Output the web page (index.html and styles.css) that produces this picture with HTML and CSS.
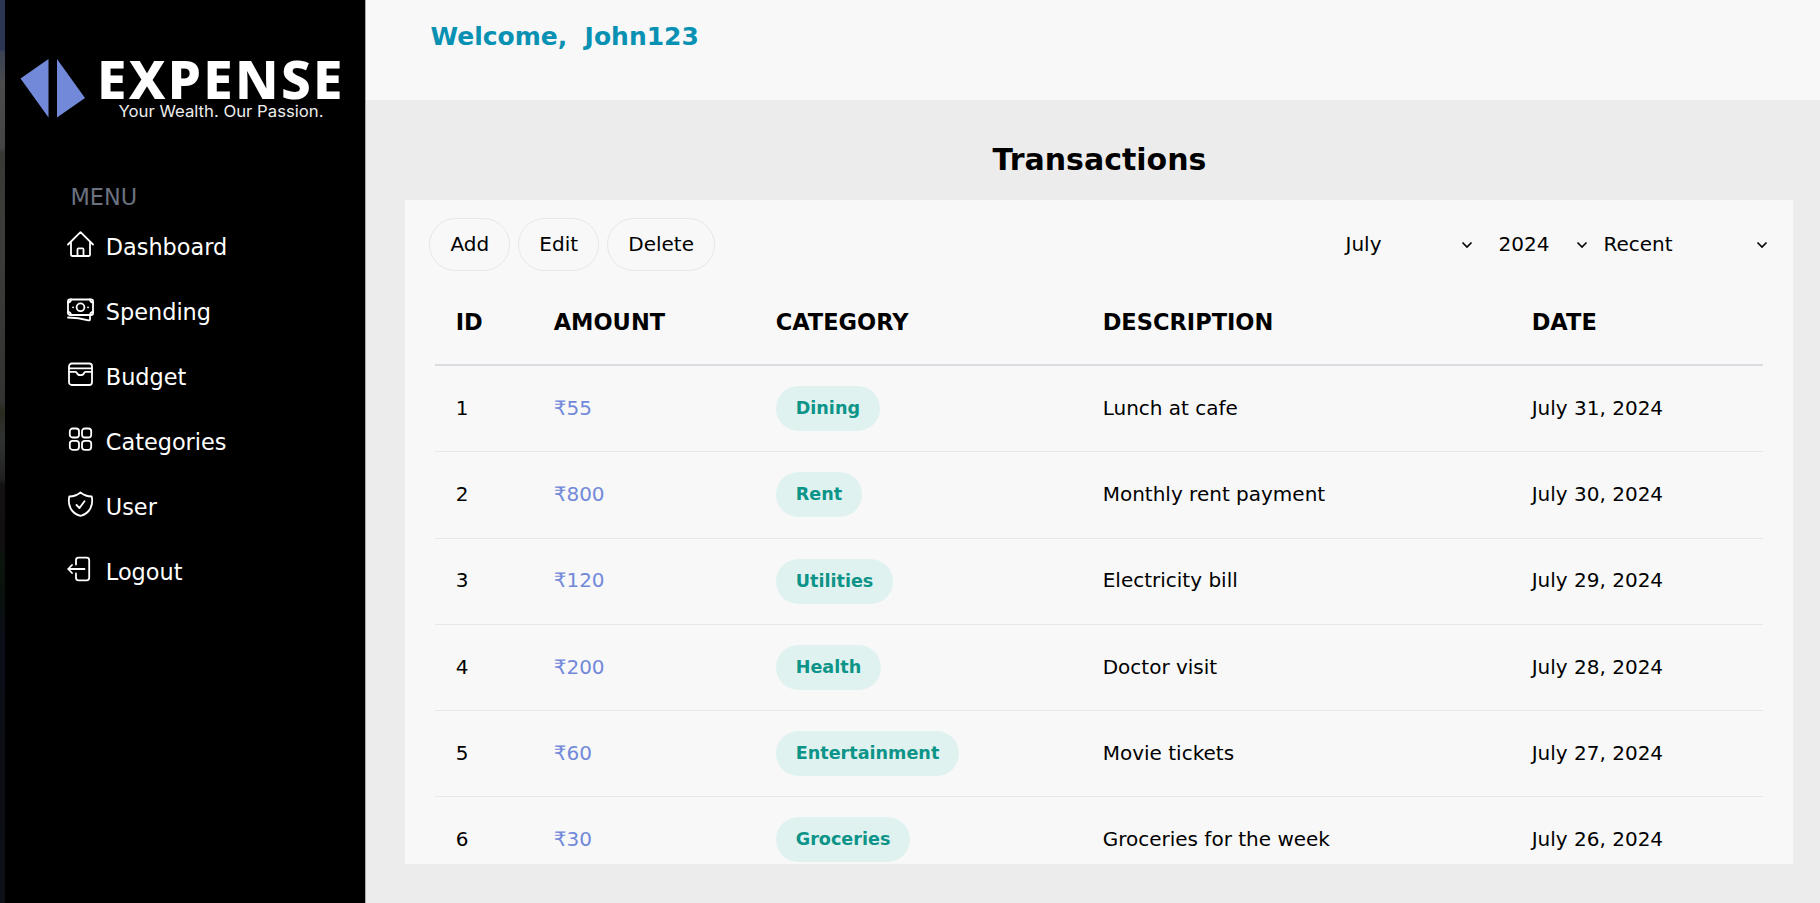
FILE: index.html
```html
<!DOCTYPE html>
<html lang="en">
<head>
<meta charset="utf-8">
<title>Expense - Transactions</title>
<link rel="stylesheet" href="styles.css">
</head>
<body>
<div class="app">
  <div class="backdrop"></div>
  <aside class="sidebar">
    <svg class="logo" width="360" height="70" viewBox="0 0 360 70">
      <path class="mark" d="M15.500 23.500 43.500 4V62.500zM52 4 80 43 52 62.500z"/>
      <text class="brand" x="92" y="43.500" textLength="245.500" lengthAdjust="spacing">EXPENSE</text>
      <text class="tagline" x="113.500" y="62" textLength="205" lengthAdjust="spacingAndGlyphs">Your Wealth. Our Passion.</text>
    </svg>
    <div class="menu-title">MENU</div>
    <nav class="menu">
      <a class="item"><svg class="icon" viewBox="0 0 27 27"><path d="M1 13.500 13.500 1.200 26 13.500M4 10.800V23.800Q4 25 5.200 25H21.800Q23 25 23 23.800V10.800M10.500 25V18.300Q10.500 17.300 11.500 17.300H15.500Q16.500 17.300 16.500 18.300V25"/></svg><span>Dashboard</span></a>
      <a class="item"><svg class="icon" viewBox="0 0 27 27"><rect x="1" y="3.500" width="25" height="15.500" rx="1.800"/><path d="M1 6.500Q3.500 6.500 4 3.500M26 6.500Q23.500 6.500 23 3.500M1 16Q3.500 16 4 19M26 16Q23.500 16 23 19M1 21.500C9 21.500 15 22.500 21.500 24.300Q23 24.500 23 23.500V20M6 11.300h.1M21 11.300h.1"/><circle cx="13.500" cy="11.300" r="3.900"/></svg><span>Spending</span></a>
      <a class="item"><svg class="icon" viewBox="0 0 27 27"><rect x="2" y="2.500" width="23" height="21.500" rx="2.800"/><path d="M2 7.300H25M2 10.800H8.500Q9.500 10.800 9.800 11.800C10.500 15 16.500 15 17.200 11.800Q17.500 10.800 18.500 10.800H25"/></svg><span>Budget</span></a>
      <a class="item"><svg class="icon" viewBox="0 0 27 27"><rect x="2.800" y="2.500" width="9.200" height="9" rx="2.800"/><rect x="15" y="2.500" width="9.200" height="9" rx="2.800"/><rect x="2.800" y="14.800" width="9.200" height="9" rx="2.800"/><rect x="15" y="14.800" width="9.200" height="9" rx="2.800"/></svg><span>Categories</span></a>
      <a class="item"><svg class="icon" viewBox="0 0 27 27"><path d="M13.500 1.500Q8.500 5.500 2.300 5.500C.5 14 4 22.500 13.500 24.800 23 22.500 26.500 14 24.700 5.500Q18.500 5.500 13.500 1.500ZM9.500 14 12.500 17 17.500 10.300"/></svg><span>User</span></a>
      <a class="item"><svg class="icon" viewBox="0 0 27 27"><path d="M9 8.500V4.200Q9 1.700 11.500 1.700H19.700Q22.200 1.700 22.200 4.200V21.800Q22.200 24.300 19.700 24.300H11.500Q9 24.300 9 21.800V17.500M17.500 13H1.200M5 9 1.200 13 5 17"/></svg><span>Logout</span></a>
    </nav>
  </aside>
  <main class="main">
    <header class="topbar">Welcome,&nbsp; John123</header>
    <h1 class="title">Transactions</h1>
    <section class="panel">
      <div class="toolbar">
        <button class="btn">Add</button><button class="btn">Edit</button><button class="btn">Delete</button>
        <div class="filters">
          <div class="select month"><span>July</span><svg class="chevron" viewBox="0 0 12 8"><path d="M1.500 1.500 6 6 10.500 1.500"/></svg></div>
          <div class="select year"><span>2024</span><svg class="chevron" viewBox="0 0 12 8"><path d="M1.500 1.500 6 6 10.500 1.500"/></svg></div>
          <div class="select order"><span>Recent</span><svg class="chevron" viewBox="0 0 12 8"><path d="M1.500 1.500 6 6 10.500 1.500"/></svg></div>
        </div>
      </div>
      <div class="table">
        <div class="row head"><span>ID</span><span>AMOUNT</span><span>CATEGORY</span><span>DESCRIPTION</span><span>DATE</span></div>
        <div class="row"><span>1</span><span class="amount">₹55</span><span><b class="tag">Dining</b></span><span>Lunch at cafe</span><span>July 31, 2024</span></div>
        <div class="row"><span>2</span><span class="amount">₹800</span><span><b class="tag">Rent</b></span><span>Monthly rent payment</span><span>July 30, 2024</span></div>
        <div class="row"><span>3</span><span class="amount">₹120</span><span><b class="tag">Utilities</b></span><span>Electricity bill</span><span>July 29, 2024</span></div>
        <div class="row"><span>4</span><span class="amount">₹200</span><span><b class="tag">Health</b></span><span>Doctor visit</span><span>July 28, 2024</span></div>
        <div class="row"><span>5</span><span class="amount">₹60</span><span><b class="tag">Entertainment</b></span><span>Movie tickets</span><span>July 27, 2024</span></div>
        <div class="row"><span>6</span><span class="amount">₹30</span><span><b class="tag">Groceries</b></span><span>Groceries for the week</span><span>July 26, 2024</span></div>
      </div>
    </section>
  </main>
</div>
</body>
</html>
```
FILE: styles.css
```css
* { box-sizing: border-box; }
body { margin: 0; font-family: "DejaVu Sans", sans-serif; font-size: 20px; color: #000; }
.app { display: flex; height: 903px; overflow: hidden; background: #ececec; }
.backdrop {
  width: 5px;
  background: linear-gradient(#2a3654 0 50px, #3a4254 51px, #4b4b4b 85px, #454545 148px, #393834 152px, #3c3d3b 250px, #333432 400px, #292b1f 412px, #303232 440px, #222 478px, #131211 485px, #110f0f 545px, #0b150d 560px, #0a110c 590px, #0b0e18 640px, #0d0e14 760px, #0e1018 903px);
}
.sidebar { width: 360px; background: #000; color: #fff; display: flex; flex-direction: column; padding-top: 55px; }
.logo { display: block; overflow: visible; }
.mark { fill: #7289da; }
.brand { font: 800 53px "Noto Sans", sans-serif; fill: #fff; }
.tagline { font: 400 16px Inter, sans-serif; fill: #eee; }
.menu-title { margin: 59px 0 0 65.500px; font-size: 22.4px; line-height: 26px; color: #6b7280; }
.menu { display: flex; flex-direction: column; padding: 4px 0 0 62px; }
.item { display: flex; align-items: center; gap: 11.800px; height: 65px; font-size: 22.4px; }
.icon { width: 27px; height: 27px; margin-top: -4px; fill: none; stroke: #fff; stroke-width: 1.8; stroke-linecap: round; stroke-linejoin: round; }
.main { flex: 1; display: flex; flex-direction: column; border-left: 1px solid #aaa; }
.topbar { height: 100px; padding: 22px 0 0 64.500px; background: #f8f8f8; color: #0891b2; font-size: 25px; line-height: 30px; font-weight: 700; }
.title { margin: 42px 0 22px 1px; padding-left: 12px; text-align: center; font-size: 30px; line-height: 36px; }
.panel { margin: 0 27px 0 39px; height: 664px; background: #f8f8f8; overflow: hidden; }
.toolbar { display: flex; gap: 8px; padding: 18px 25.500px 0 24.300px; }
.btn { height: 53px; padding: 0 20.100px 1px; border: 1px solid #e5e7eb; border-radius: 27px; background: transparent; font: inherit; color: #000; }
.filters { display: flex; align-items: center; margin-left: auto; padding-bottom: 1px; }
.select { display: flex; align-items: center; justify-content: space-between; }
.month { width: 127px; margin-right: 26px; }
.year { width: 89px; margin-right: 16px; }
.order { width: 164px; }
.chevron { width: 12px; height: 8px; fill: none; stroke: #000; stroke-width: 1.6; margin-top: 1px; }
.table { padding: 9px 30px 0; }
.row { display: grid; grid-template-columns: 98px 222px 327px 429px 1fr; align-items: center; height: 86.2px; padding-left: 20.700px; border-bottom: 1px solid #e5e7eb; }
.row:not(.head) > span:not(:nth-child(3)) { padding-bottom: 1.500px; }
.head { font-size: 22.5px; font-weight: 700; border-bottom: 2px solid #d9dce1; }
.amount { color: #7289da; }
.tag { display: inline-flex; align-items: center; height: 45px; padding: 0 20px 1px; border-radius: 22.5px; background: #e0f2f0; color: #0d9488; font-size: 17.6px; vertical-align: middle; }
```
